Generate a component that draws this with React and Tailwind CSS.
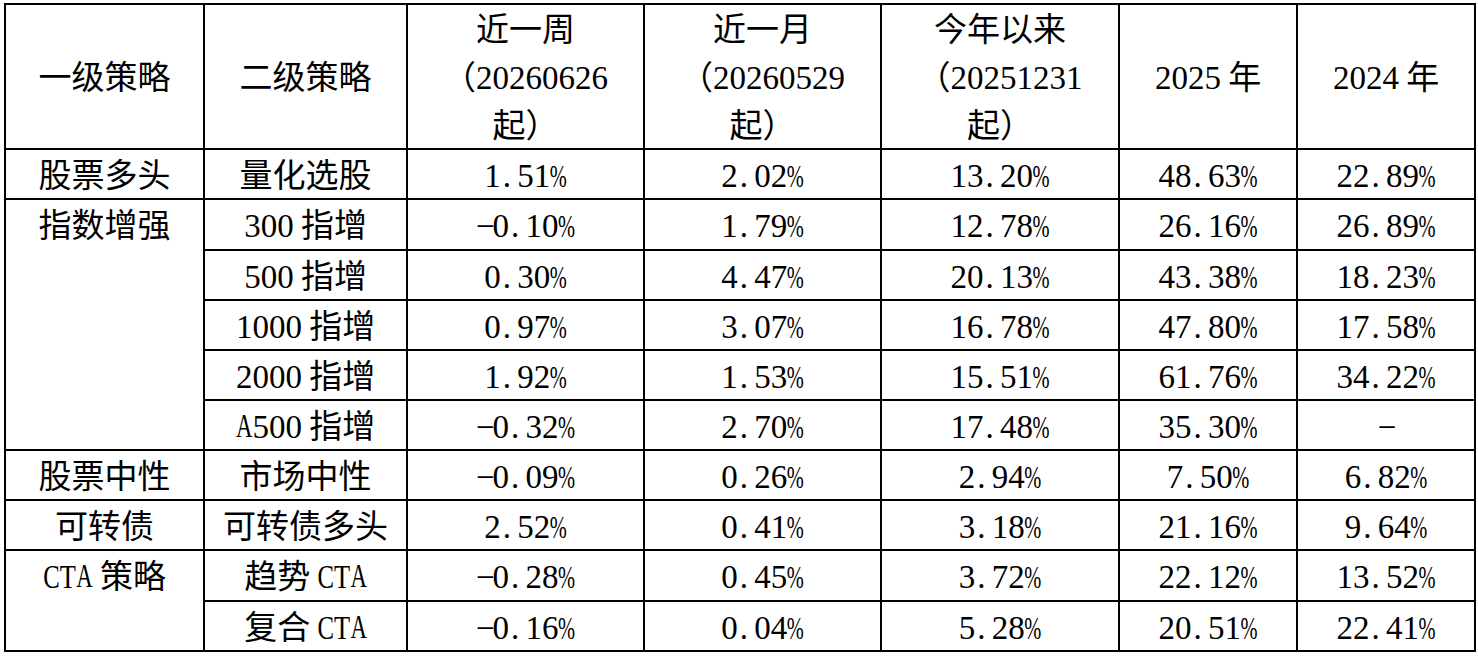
import React from "react";

const isCjk = (c) => /[\u3000-\u9fff\uff00-\uffef]/.test(c);

// narrow Latin capitals: smaller size, stretched back up so they fit a half-width cell
const letterCls = {
  A: "text-[0.69em] scale-y-[1.45]",
  C: "text-[0.75em] scale-y-[1.33]",
  T: "text-[0.8em] scale-y-[1.25]",
};

// SimSun-like: every Latin char sits in a half-width cell
function Txt({ s }) {
  return (
    <>
      {[...s].map((c, i) => {
        if (isCjk(c)) return <span key={i}>{c}</span>;
        if (c === " ") return <span key={i} className="inline-block w-[0.22em]" />;
        if (c === ".")
          return (
            <span key={i} className="inline-block w-[0.5em] text-left pl-[0.06em]">
              .
            </span>
          );
        if (c === "%")
          return (
            <span key={i} className="inline-block w-[0.5em] text-center">
              <span className="inline-block text-[0.62em] scale-y-[1.5] origin-[50%_84%] leading-none -translate-x-[0.03em]">%</span>
            </span>
          );
        if (letterCls[c])
          return (
            <span key={i} className="inline-block w-[0.5em] text-center">
              <span className={`inline-block leading-none origin-[50%_84%] ${letterCls[c]}`}>{c}</span>
            </span>
          );
        return (
          <span key={i} className="inline-block w-[0.5em] text-center">
            {c}
          </span>
        );
      })}
    </>
  );
}

const header = [
  ["一级策略"],
  ["二级策略"],
  ["近一周", "（20260626", "起）"],
  ["近一月", "（20260529", "起）"],
  ["今年以来", "（20251231", "起）"],
  ["2025 年"],
  ["2024 年"],
];

const rows = [
  { top: "股票多头", cells: ["量化选股", "1.51%", "2.02%", "13.20%", "48.63%", "22.89%"] },
  { top: "指数增强", span: 5, cells: ["300 指增", "−0.10%", "1.79%", "12.78%", "26.16%", "26.89%"] },
  { cells: ["500 指增", "0.30%", "4.47%", "20.13%", "43.38%", "18.23%"] },
  { cells: ["1000 指增", "0.97%", "3.07%", "16.78%", "47.80%", "17.58%"] },
  { cells: ["2000 指增", "1.92%", "1.53%", "15.51%", "61.76%", "34.22%"] },
  { cells: ["A500 指增", "−0.32%", "2.70%", "17.48%", "35.30%", "−"] },
  { top: "股票中性", cells: ["市场中性", "−0.09%", "0.26%", "2.94%", "7.50%", "6.82%"] },
  { top: "可转债", cells: ["可转债多头", "2.52%", "0.41%", "3.18%", "21.16%", "9.64%"] },
  { top: "CTA 策略", span: 2, cells: ["趋势 CTA", "−0.28%", "0.45%", "3.72%", "22.12%", "13.52%"] },
  { cells: ["复合 CTA", "−0.16%", "0.04%", "5.28%", "20.51%", "22.41%"] },
];

export default function App() {
  return (
    <div className="min-h-screen bg-white pl-[4px] pt-[3px] text-black font-['Liberation_Serif','Noto_Sans_CJK_SC',serif] text-[33px]">
      <div className="grid w-fit grid-cols-[197px_201px_235px_235px_236px_176px_176px] grid-rows-[143px_48px_49px_48px_48px_48px_48px_48px_48px_49px_48px] gap-[2px] bg-black p-[2px]">
        {header.map((lines, i) => (
          <div key={i} className="flex flex-col items-center justify-center bg-white pt-[2px] leading-[48px]">
            {lines.map((l) => (
              <div key={l} className="whitespace-nowrap">
                <Txt s={l} />
              </div>
            ))}
          </div>
        ))}

        {rows.map((r, ri) => (
          <React.Fragment key={ri}>
            {r.top && (
              <div
                className={`bg-white text-center leading-[48px] pt-[2px] whitespace-nowrap ${
                  r.span === 5 ? "row-span-5" : r.span === 2 ? "row-span-2" : ""
                }`}
              >
                <Txt s={r.top} />
              </div>
            )}
            {r.cells.map((c, ci) => (
              <div key={ci} className="bg-white text-center leading-[48px] pt-[2px] whitespace-nowrap">
                <Txt s={c} />
              </div>
            ))}
          </React.Fragment>
        ))}
      </div>
    </div>
  );
}
